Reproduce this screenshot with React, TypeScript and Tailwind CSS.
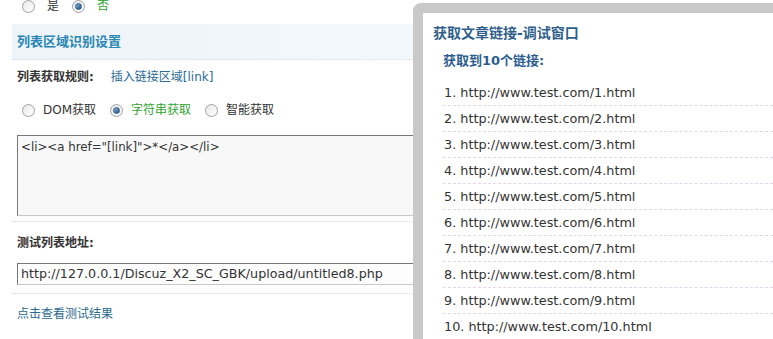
import React from 'react';

const cjk = '"DejaVu Sans", "Noto Sans CJK SC", sans-serif';

const Radio = ({ checked }: { checked?: boolean }) => (
  <span className="inline-flex h-[13px] w-[13px] shrink-0 items-center justify-center rounded-full border border-[#a0a0a0] bg-gradient-to-br from-[#e9e9e9] to-[#ffffff]">
    {checked && (
      <span className="h-[7px] w-[7px] rounded-full bg-gradient-to-br from-[#8fb8dc] to-[#1c4f80] border border-[#2a5a88]" />
    )}
  </span>
);

const Option = ({ label, checked, active, gap }: { label: string; checked?: boolean; active?: boolean; gap: string }) => (
  <label className={`flex items-center ${gap}`}>
    <Radio checked={checked} />
    <span className={active ? 'text-[#2fa52f]' : 'text-[#333]'}>{label}</span>
  </label>
);

const links = Array.from({ length: 10 }, (_, i) => `${i + 1}. http://www.test.com/${i + 1}.html`);

export default function App() {
  return (
    <div
      className="relative h-[339px] w-[773px] overflow-hidden bg-white text-[12px] text-[#333]"
      style={{ fontFamily: cjk }}
    >
      {/* page form */}
      <div className="w-[740px] pl-[12px]">
        <div className="-mt-[1px] flex h-[14px] items-center gap-[13px] pl-[10px]">
          <Option label="是" gap="gap-[12px]" />
          <Option label="否" checked active gap="gap-[12px]" />
        </div>

        <div className="mt-[11px] flex h-[36px] items-center border-b border-dotted border-[#d6dde4] bg-gradient-to-r from-[#edf4fa] to-[#f7fafd] pl-[5px]">
          <span className="text-[13px] font-bold text-[#2a87b3]">列表区域识别设置</span>
        </div>

        <div className="flex h-[34px] items-center pl-[5px]">
          <span className="font-bold text-[#333]">列表获取规则:</span>
          <span className="ml-[17px] text-[#2c6a98]">插入链接区域[link]</span>
        </div>

        <div className="flex h-[32px] items-center gap-[14px] pl-[10px]">
          <Option label="DOM获取" gap="gap-[8px]" />
          <Option label="字符串获取" checked active gap="gap-[8px]" />
          <Option label="智能获取" gap="gap-[8px]" />
        </div>

        <div className="border-b border-dotted border-[#d8d8d8] pb-[5px] pt-[9px]">
          <div className="ml-[5px] h-[81px] border border-t-[#777] border-l-[#777] border-b-[#c8c8c8] border-r-[#c8c8c8] bg-[#f8f8f8] px-[3px] pt-[3px] text-[11.8px] leading-[16px] text-[#333]">
            {'<li><a href="[link]">*</a></li>'}
          </div>
        </div>

        <div className="border-b border-dotted border-[#d8d8d8] pb-[8px]">
          <div className="flex h-[41px] items-center pl-[5px]">
            <span className="font-bold text-[#333]">测试列表地址:</span>
          </div>
          <div className="ml-[5px] flex h-[22px] items-center border border-t-[#777] border-l-[#777] border-b-[#c8c8c8] border-r-[#c8c8c8] bg-[#fdfdfd] px-[3px] text-[12.7px] text-[#333]">
            http://127.0.0.1/Discuz_X2_SC_GBK/upload/untitled8.php
          </div>
        </div>

        <div className="flex h-[40px] items-center pl-[5px]">
          <span className="text-[#2a6a8f]">点击查看测试结果</span>
        </div>
      </div>

      {/* debug window */}
      <div className="absolute -bottom-[20px] -right-[20px] left-[413px] top-[3px] rounded-tl-[8px] border-[10px] border-[#c9c9c9] bg-white">
        <div className="pl-[10px] pt-[12px] text-[14px] font-bold leading-[16px] text-[#2f5f8a]">获取文章链接-调试窗口</div>
        <div className="mt-[12px] pl-[20px] text-[13px] font-bold leading-[16px] text-[#2d5d8f]">获取到10个链接:</div>
        <ul className="mt-[11px] pl-[20px]">
          {links.map((t) => (
            <li
              key={t}
              className="flex h-[26px] items-center border-b border-dashed border-[#e6d3ec] pl-[1px] text-[12.8px] text-[#333]"
            >
              {t}
            </li>
          ))}
        </ul>
      </div>
    </div>
  );
}
